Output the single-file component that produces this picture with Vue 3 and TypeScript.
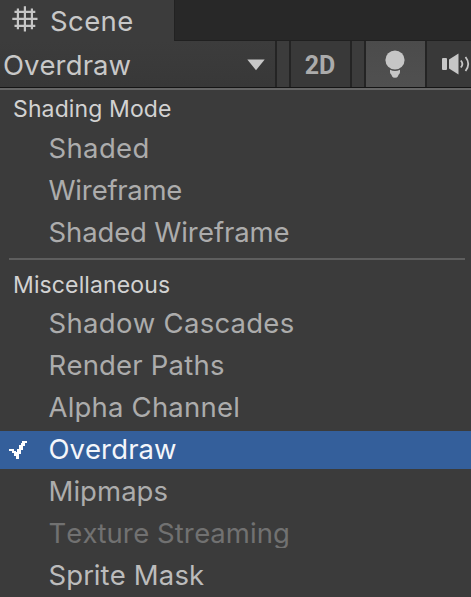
<script setup lang="ts">
interface MenuItem {
  label: string
  spacing: string
  checked?: boolean
  disabled?: boolean
  bright?: boolean
}
interface MenuGroup {
  title: string
  items: MenuItem[]
}

const groups: MenuGroup[] = [
  {
    title: 'Shading Mode',
    items: [
      { label: 'Shaded', spacing: '0.35px' },
      { label: 'Wireframe', spacing: '-0.3px' },
      { label: 'Shaded Wireframe', spacing: '-0.14px' },
    ],
  },
  {
    title: 'Miscellaneous',
    items: [
      { label: 'Shadow Cascades', spacing: '0.3px' },
      { label: 'Render Paths', spacing: '0.2px' },
      { label: 'Alpha Channel', spacing: '0.2px' },
      { label: 'Overdraw', spacing: '0px', checked: true },
      { label: 'Mipmaps', spacing: '0.05px' },
      { label: 'Texture Streaming', spacing: '0.05px', disabled: true },
      { label: 'Sprite Mask', spacing: '0.15px', bright: true },
    ],
  },
]
</script>

<template>
  <div class="editor">
    <header class="tabs">
      <div class="tab">
        <svg class="grid-icon" viewBox="0 0 26 26">
          <path d="M5.900 2.500v20.800M19.900 2.500v20.800M2.500 5.900h20.800M2.500 19.900h20.800" />
          <path d="M12.900 .3v25.200M.3 12.900h25.200" />
        </svg>
        <span class="tab-label">Scene</span>
      </div>
      <div class="tab-rest"></div>
    </header>

    <div class="toolbar">
      <div class="dropdown">
        <span class="dropdown-label">Overdraw</span>
        <svg class="arrow" viewBox="0 0 18 12"><path d="M.3.5h17.4L9 11.3z" /></svg>
      </div>
      <div class="spacer"></div>
      <div class="button mode">2D</div>
      <div class="spacer"></div>
      <div class="button light">
        <svg class="bulb" viewBox="0 0 20 28">
          <circle cx="10" cy="10" r="9.6" />
          <path d="M5 19.800q5 2.400 10 0v2.500q0 1.400-1.400 2.400l-.8 1.800q-.5 1.200-2.800 1.200t-2.800-1.200l-.8-1.800Q5 23.700 5 22.300z" />
        </svg>
      </div>
      <div class="button audio">
        <svg class="speaker" viewBox="0 0 30 24">
          <rect x="0" y="6" width="5" height="12" rx="1" />
          <path d="M7 7.500 16.500 1.500v21L7 16.500z" />
          <path class="wave" d="M18.800 8.500q3.200 3.500 0 7M23.500 5q5.500 7 0 14" />
        </svg>
      </div>
    </div>

    <nav class="menu">
      <section v-for="g in groups" :key="g.title" class="group">
        <h2 class="title">{{ g.title }}</h2>
        <ul class="items">
          <li
            v-for="i in g.items"
            :key="i.label"
            class="item"
            :class="{ checked: i.checked, disabled: i.disabled, bright: i.bright }"
          >
            <span class="mark">
              <svg v-if="i.checked" class="check" viewBox="0 0 18 19">
                <path d="M13 0h5v2h-2v3h-2v4h-2v4h-2v5H7v-3H5v-3H3v-2H0V8h5v2h2v1h1V8h2V4h2V2h1z" />
              </svg>
            </span>
            <span class="label" :style="{ letterSpacing: i.spacing }">{{ i.label }}</span>
          </li>
        </ul>
      </section>
    </nav>
  </div>
</template>

<style>
body {
  margin: 0;
  background: #3b3b3b;
}
</style>

<style scoped>
.editor {
  width: 471px;
  height: 597px;
  overflow: hidden;
  display: flex;
  flex-direction: column;
  background: #3b3b3b;
  color: #c8c8c8;
  font-family: Inter, 'Liberation Sans', sans-serif;
  font-size: 27.5px;
  font-kerning: none;
}
.tabs {
  display: flex;
  height: 41px;
  flex: none;
}
.tab {
  box-sizing: border-box;
  width: 174px;
  padding-left: 12px;
  display: flex;
  align-items: center;
  background: #3c3c3c;
}
.grid-icon {
  width: 26px;
  height: 26px;
  margin-top: -3px;
  fill: none;
  stroke: #c6c6c6;
  stroke-width: 2.2;
}
.tab-label {
  margin-left: 12px;
  line-height: 40px;
  letter-spacing: 0.4px;
}
.tab-rest {
  box-sizing: border-box;
  flex: 1;
  background: #282828;
  border-left: 1px solid #222;
  border-bottom: 1px solid #202020;
}
.toolbar {
  box-sizing: border-box;
  height: 47px;
  flex: none;
  display: flex;
  border-bottom: 1px solid #151515;
  background: #3c3c3c;
}
.dropdown {
  box-sizing: border-box;
  width: 275px;
  flex: none;
  padding: 2px 10px 0 3px;
  display: flex;
  align-items: center;
  justify-content: space-between;
  background: linear-gradient(#3c3c3c, #383838);
}
.dropdown-label {
  line-height: 44px;
  letter-spacing: 0;
}
.arrow {
  width: 18px;
  height: 12px;
  fill: #c8c8c8;
}
.spacer {
  box-sizing: border-box;
  width: 16px;
  border-left: 2px solid #242424;
  border-right: 2px solid #242424;
  flex: none;
}
.button {
  box-sizing: border-box;
  display: flex;
  align-items: center;
  justify-content: center;
  flex: none;
}
.mode {
  width: 59px;
  padding: 3px 1px 0 0;
  font: 700 25px/43px Roboto, sans-serif;
  color: #ababab;
  background: #393939;
}
.light {
  width: 59px;
  padding-right: 1px;
  background: linear-gradient(#4b4b4b, #505050);
}
.bulb {
  width: 20px;
  height: 28px;
  margin-top: 0;
  fill: #c6c6c6;
}
.audio {
  width: 60px;
  border-left: 2px solid #242424;
  padding-left: 15px;
  justify-content: flex-start;
  background: #393939;
}
.speaker {
  width: 30px;
  height: 24px;
  margin-top: -1px;
  fill: #c6c6c6;
}
.wave {
  fill: none;
  stroke: #c6c6c6;
  stroke-width: 1.8;
}
.menu {
  flex: 1;
  border-top: 2px solid #666;
}
.group + .group {
  margin: 6px 6px 0 9px;
  border-top: 2px solid #5e5e5e;
}
.title {
  margin: 0;
  padding-left: 13px;
  height: 40px;
  line-height: 38px;
  font-size: 23px;
  font-weight: 400;
  letter-spacing: 0.12px;
  color: #d2d2d2;
}
.group + .group .title {
  padding-left: 4px;
  height: 45px;
  line-height: 50px;
}
.items {
  margin: 0;
  padding: 0;
  list-style: none;
  display: grid;
  gap: 4px;
}
.group + .group .items {
  margin: 0 -6px 0 -9px;
}
.item {
  display: flex;
  align-items: center;
  height: 38px;
  color: #acacac;
}
.mark {
  width: 48.5px;
  flex: none;
  padding-left: 9px;
  box-sizing: border-box;
  display: flex;
}
.check {
  width: 18px;
  height: 19px;
  fill: #fff;
}
.label {
  height: 38px;
  line-height: 36px;
  white-space: nowrap;
  clip-path: inset(0 0 5px 0);
}
.checked {
  background: #345f9b;
  color: #f4f6fa;
}
.disabled {
  color: #717171;
}
.bright {
  color: #bcbcbc;
}
</style>
